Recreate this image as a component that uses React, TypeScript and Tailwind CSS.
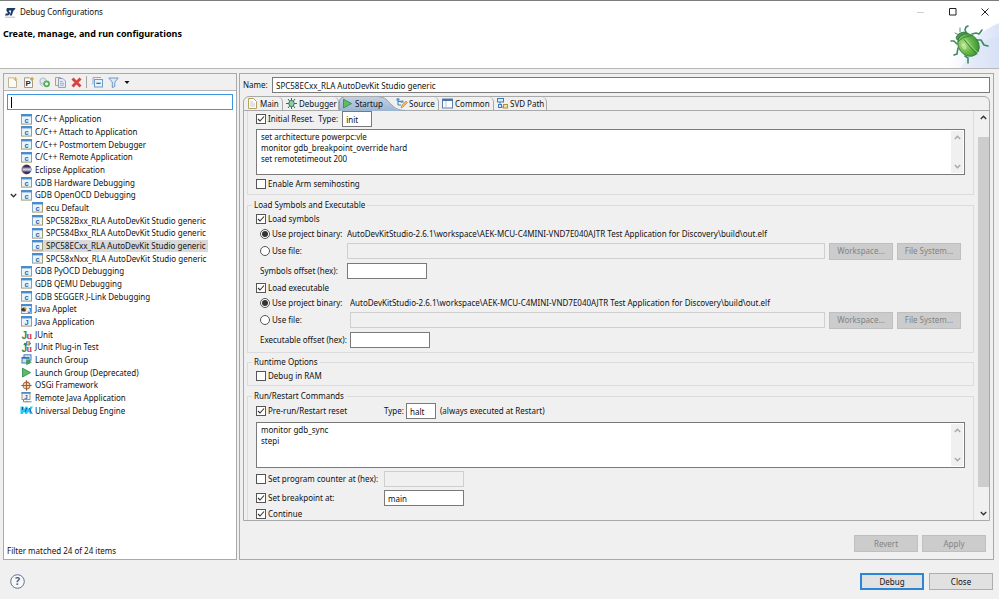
import React, { useState } from "react";
import clsx from "clsx";

type IconName =
  | "c"
  | "eclipse"
  | "applet"
  | "java"
  | "junit"
  | "junitPlugin"
  | "group"
  | "play"
  | "osgi"
  | "remote"
  | "ude";

interface TreeItem {
  label: string;
  icon: IconName;
  child?: boolean;
  open?: boolean;
}

const items: TreeItem[] = [
  { label: "C/C++ Application", icon: "c" },
  { label: "C/C++ Attach to Application", icon: "c" },
  { label: "C/C++ Postmortem Debugger", icon: "c" },
  { label: "C/C++ Remote Application", icon: "c" },
  { label: "Eclipse Application", icon: "eclipse" },
  { label: "GDB Hardware Debugging", icon: "c" },
  { label: "GDB OpenOCD Debugging", icon: "c", open: true },
  { label: "ecu Default", icon: "c", child: true },
  { label: "SPC582Bxx_RLA AutoDevKit Studio generic", icon: "c", child: true },
  { label: "SPC584Bxx_RLA AutoDevKit Studio generic", icon: "c", child: true },
  { label: "SPC58ECxx_RLA AutoDevKit Studio generic", icon: "c", child: true },
  { label: "SPC58xNxx_RLA AutoDevKit Studio generic", icon: "c", child: true },
  { label: "GDB PyOCD Debugging", icon: "c" },
  { label: "GDB QEMU Debugging", icon: "c" },
  { label: "GDB SEGGER J-Link Debugging", icon: "c" },
  { label: "Java Applet", icon: "applet" },
  { label: "Java Application", icon: "java" },
  { label: "JUnit", icon: "junit" },
  { label: "JUnit Plug-in Test", icon: "junitPlugin" },
  { label: "Launch Group", icon: "group" },
  { label: "Launch Group (Deprecated)", icon: "play" },
  { label: "OSGi Framework", icon: "osgi" },
  { label: "Remote Java Application", icon: "remote" },
  { label: "Universal Debug Engine", icon: "ude" },
];

const BINARY =
  "AutoDevKitStudio-2.6.1\\workspace\\AEK-MCU-C4MINI-VND7E040AJTR Test Application for Discovery\\build\\out.elf";

function Svg({ children, className = "size-[11px]" }: { children: React.ReactNode; className?: string }) {
  return (
    <svg viewBox="0 0 11 11" className={clsx("shrink-0 overflow-visible", className)} aria-hidden="true">
      {children}
    </svg>
  );
}

function WindowFrame({ letter }: { letter: string }) {
  return (
    <>
      <rect x="0.5" y="0.5" width="10" height="9.6" fill="#eaf4fc" stroke="#a39b6e" />
      <rect x="0" y="0" width="11" height="2.4" fill="#4a8cca" />
      <path d="M0.5 2v8" stroke="#7fa6c9" />
      <text x="5.6" y="8.6" textAnchor="middle" fontSize="7.5" fontWeight="700" fill="#2468ac" fontFamily="Liberation Sans, sans-serif">
        {letter}
      </text>
    </>
  );
}

function TreeIcon({ name }: { name: IconName }) {
  switch (name) {
    case "c":
      return <Svg><WindowFrame letter="c" /></Svg>;
    case "java":
      return <Svg><WindowFrame letter="J" /></Svg>;
    case "applet":
      return (
        <Svg>
          <rect x="0.5" y="0.5" width="10" height="9" fill="#eaf4fc" stroke="#a39b6e" />
          <rect width="11" height="2.2" fill="#4a8cca" />
          <path d="M0 5.4c2-2.4 4-2.4 5.4-.6l-1 2.6H1.6z" fill="#4b3a24" />
          <circle cx="4.4" cy="4.6" r="1.1" fill="#e8a33a" />
          <text x="8.2" y="9" textAnchor="middle" fontSize="6.5" fontWeight="700" fill="#2468ac" fontFamily="Liberation Sans, sans-serif">J</text>
        </Svg>
      );
    case "eclipse":
      return (
        <Svg>
          <circle cx="5.2" cy="5.5" r="4.9" fill="#e09a58" />
          <circle cx="5.8" cy="5.5" r="4.7" fill="#3a3060" />
          <path d="M1.6 3.6h8.400v3.800h-8.400z" fill="#a9a7c8" />
          <path d="M1.3 5.5h9" stroke="#d5d3e6" strokeWidth="0.8" />
        </Svg>
      );
    case "junit":
    case "junitPlugin":
      return (
        <Svg>
          <text x="0.6" y="9.6" fontSize="10" fontWeight="700" fill="#2f8a4c" fontFamily="Liberation Sans, sans-serif">J</text>
          <text x="5.6" y="9.6" fontSize="10" fontWeight="700" fill="#d0435a" fontFamily="Liberation Serif, serif">u</text>
          {name === "junitPlugin" && (
            <g>
              <path d="M3 1.500h7" stroke="#3f83c4" strokeWidth="1.2" />
              <rect x="5.6" y="-0.2" width="3.2" height="3.2" fill="#e6c25a" stroke="#3f6fa8" strokeWidth="0.7" />
            </g>
          )}
        </Svg>
      );
    case "group":
      return (
        <Svg>
          <rect x="3" y="0.8" width="7" height="5.4" fill="#dbeaf8" stroke="#3f7fb8" />
          <rect x="1" y="3.4" width="7" height="5.6" fill="#cfe2f3" stroke="#3f7fb8" />
          <path d="M1 4h7" stroke="#2f6ba8" strokeWidth="1.4" />
          <path d="M5.6 5.4l4.8 2.8-4.8 2.6z" fill="#3fa64a" stroke="#2b7f43" strokeWidth="0.5" />
        </Svg>
      );
    case "play":
      return (
        <Svg>
          <path d="M1.5 1.2l8 4.4-8 4.4z" fill="#62bb62" stroke="#2f9150" strokeWidth="0.9" />
        </Svg>
      );
    case "osgi":
      return (
        <Svg>
          <circle cx="5.5" cy="5.5" r="3.4" fill="#f3d9bd" stroke="#a8683a" strokeWidth="1.1" />
          <path d="M5.5 0.3v10.4M0.3 5.5h10.4" stroke="#9c5f35" strokeWidth="1.1" />
        </Svg>
      );
    case "remote":
      return (
        <Svg>
          <rect x="1" y="0.5" width="8" height="7" fill="#eaf4fc" stroke="#a39b6e" />
          <rect x="0.5" y="0" width="9" height="1.8" fill="#4a8cca" />
          <text x="5" y="6.9" textAnchor="middle" fontSize="6" fontWeight="700" fill="#2468ac" fontFamily="Liberation Sans, sans-serif">J</text>
          <path d="M2.5 7.8v2h8M6 9.8v-1" stroke="#6f7f92" fill="none" />
        </Svg>
      );
    case "ude":
      return (
        <Svg>
          <path d="M-0.500 1.500h3l1 2.500 1-2.500h1.500L8 4l1.500-2.500H12L9.800 5.200 12 9H9L7.400 6.800 6 9H4.500L3 6.800 2 9h-2.500z" fill="#22cdf4" />
          <path d="M1.500 2v3M5.600 3l-1.400 4M8.400 3l1.800 4.500" stroke="#1b4fb0" strokeWidth="1" fill="none" />
        </Svg>
      );
  }
}

function StLogo() {
  return (
    <svg viewBox="0 0 11 11" className="size-[11px] shrink-0" aria-hidden="true">
      <path d="M2.2 1h8.3L9.2 3.4H8.5L6.8 8.5H4.7L6.3 3.4H4.6c-.9 0-1 .6-.5 1l.6.7C5.6 6.2 4.7 8.5 2.8 8.5H0l.8-2h1.4c.8 0 .9-.5.5-.9l-.6-.7C1 3.6 1.2 1.8 2.2 1z" fill="#1d3a66" />
      <path d="M0 10.2h10" stroke="#8fa3bf" strokeWidth="0.7" />
    </svg>
  );
}

function BugBanner() {
  return (
    <svg viewBox="0 0 60 45" className="h-[45px] w-[60px]" aria-hidden="true">
      <defs>
        <linearGradient id="sky" x1="0" x2="1" y1="0.600" y2="0.500">
          <stop offset="0" stopColor="#ffffff" />
          <stop offset="0.45" stopColor="#f0f4fc" />
          <stop offset="1" stopColor="#dce5f7" />
        </linearGradient>
        <radialGradient id="shell" cx="0.35" cy="0.35" r="0.75">
          <stop offset="0" stopColor="#b4e087" />
          <stop offset="0.5" stopColor="#69b948" />
          <stop offset="1" stopColor="#358c36" />
        </radialGradient>
      </defs>
      <path d="M6 45C22 26 40 8 60 0v45z" fill="url(#sky)" />
      <path d="M36 22C44 18 52 15 60 14v31H22z" fill="#cddaf3" opacity="0.35" />
      <g fill="none" stroke="#3a8a64" strokeWidth="1.600" strokeLinecap="round" strokeLinejoin="round">
        <path d="M27 9l-1-2 1-3 2-1" />
        <path d="M33 11l4-1 3 1 3-4" />
        <path d="M38 17l4 0 3 5 4 1" />
        <path d="M18 21l-3-3h-3" />
        <path d="M19 25l-1 6-3 1" />
        <path d="M26 33l3 2v5" />
        <path d="M20 12l-4-2M21 9l0-4" strokeWidth="0.9" />
      </g>
      <ellipse cx="23.5" cy="13.5" rx="6.5" ry="4" transform="rotate(-20 23.5 13.5)" fill="#4d9a43" stroke="#2d7540" strokeWidth="0.8" />
      <ellipse cx="29.5" cy="22" rx="10" ry="12" transform="rotate(-38 29.5 22)" fill="url(#shell)" stroke="#347f42" strokeWidth="0.9" />
      <path d="M19 19c3-4 8-6 13-6M25 16.5c4 5 8 9.500 13 15" fill="none" stroke="#2d7a3c" strokeWidth="0.900" />
      <path d="M26.200 16c4 5 8 9 12.800 14" fill="none" stroke="#c6ebb0" strokeWidth="0.6" />
      <ellipse cx="25" cy="23.500" rx="2" ry="3.500" transform="rotate(-30 25 23.500)" fill="#d5f2bd" opacity="0.55" />
    </svg>
  );
}

function Chevron({ up, className }: { up?: boolean; className?: string }) {
  return (
    <svg viewBox="0 0 7 5" className={clsx("h-[5px] w-[7px] fill-none stroke-[1.4]", className)} aria-hidden="true">
      <path d={up ? "M0.800 4L3.500 1.300 6.200 4" : "M0.800 1L3.500 3.700 6.200 1"} />
    </svg>
  );
}

function Check({
  label,
  checked,
  className,
}: {
  label: string;
  checked?: boolean;
  className?: string;
}) {
  return (
    <label className={clsx("flex h-[14px] shrink-0 items-center gap-[2px] whitespace-nowrap pl-2", className)}>
      <span className="grid size-[10px] shrink-0 place-items-center">
        <input
          type="checkbox"
          defaultChecked={checked}
          className="peer col-start-1 row-start-1 size-[10px] appearance-none border border-[#555] bg-white"
        />
        <svg
          viewBox="0 0 10 10"
          className="pointer-events-none invisible col-start-1 row-start-1 size-[10px] fill-none stroke-[#333] peer-checked:visible"
          aria-hidden="true"
        >
          <path d="M2 5l2 2 4-4.500" strokeWidth="1.100" />
        </svg>
      </span>
      {label}
    </label>
  );
}

function Radio({ label, name, checked }: { label: string; name: string; checked?: boolean }) {
  return (
    <label className="flex items-center gap-[2px] whitespace-nowrap pl-3">
      <span className="grid size-[10px] shrink-0 place-items-center">
        <input
          type="radio"
          name={name}
          defaultChecked={checked}
          className="peer col-start-1 row-start-1 size-[10px] appearance-none rounded-full border border-[#555] bg-white"
        />
        <span className="pointer-events-none invisible col-start-1 row-start-1 size-[6px] rounded-full bg-[#333] peer-checked:visible" />
      </span>
      {label}
    </label>
  );
}

const field = "h-[16px] border border-[#7a7a7a] bg-white px-[3px] leading-3 outline-none";
const fieldOff = "h-[16px] border border-[#cfcfcf] bg-[#f0f0f0] px-[3px] outline-none";

function PushButton({ children, disabled, primary }: { children: string; disabled?: boolean; primary?: boolean }) {
  return (
    <button
      type="button"
      disabled={disabled}
      className={clsx(
        "h-[17px] w-16 shrink-0 leading-3",
        disabled && "border border-[#bfbfbf] bg-[#cccccc] text-[#838383]",
        !disabled && !primary && "border border-[#adadad] bg-[#e1e1e1]",
        primary && "border-2 border-[#2b86d9] bg-[#e1e1e1]",
      )}
    >
      {children}
    </button>
  );
}

function CommandBox({ label, text }: { label: string; text: string }) {
  return (
    <div className="mx-2 flex h-[46px] border border-[#7a7a7a] bg-white p-px">
      <textarea
        aria-label={label}
        defaultValue={text}
        className="min-w-0 flex-1 resize-none overflow-hidden pl-[3px] leading-[11px] outline-none"
      />
      <div className="flex w-[12px] flex-col items-center justify-between bg-[#f0f0f0] py-1">
        <Chevron up className="stroke-[#a8a8a8]" />
        <Chevron className="stroke-[#a8a8a8]" />
      </div>
    </div>
  );
}

function Group({ title, children, className }: { title?: string; children: React.ReactNode; className?: string }) {
  return (
    <fieldset className={clsx("min-w-0 border border-[#dcdcdc]", className)}>
      {title && <legend className="ml-1 h-3 px-[2px] leading-3">{title}</legend>}
      {children}
    </fieldset>
  );
}

function BinarySection({ kind, offset, columns }: { kind: string; offset: string; columns: string }) {
  return (
    <>
      <Check label={`Load ${kind}`} checked />
      <div className={clsx("mt-px grid h-[14px] items-center", columns)}>
        <Radio name={kind} label="Use project binary:" checked />
        <span className="truncate">{BINARY}</span>
      </div>
      <div className={clsx("mt-px grid h-[18px] items-center pr-3", columns)}>
        <Radio name={kind} label="Use file:" />
        <div className="flex items-center gap-1">
          <input aria-label={`${kind} file`} disabled className={clsx(fieldOff, "min-w-0 flex-1")} />
          <PushButton disabled>Workspace...</PushButton>
          <PushButton disabled>File System...</PushButton>
        </div>
      </div>
      <label className={clsx("mt-[3px] grid items-center", columns)}>
        <span className="whitespace-nowrap pl-3">{offset}</span>
        <input className={clsx(field, "w-20")} />
      </label>
    </>
  );
}

function Toolbar() {
  return (
    <div className="flex h-[17px] shrink-0 items-center gap-[5px] border-b border-[#b4b4b4] bg-[#f0f0f0] pl-[3px]">
      <button type="button" aria-label="New launch configuration">
        <Svg>
          <path d="M1.500 0.800h5l3 3v6.700h-8z" fill="#fdfbf3" stroke="#b9ad86" strokeWidth="0.900" />
          <path d="M8.500 0v4M6.500 2h4" stroke="#e3b341" strokeWidth="1.200" />
        </Svg>
      </button>
      <button type="button" aria-label="New prototype">
        <Svg>
          <path d="M1.500 0.800h5l3 3v6.700h-8z" fill="#fdfbf3" stroke="#9a9274" strokeWidth="0.900" />
          <text x="2.400" y="8.800" fontSize="8" fontWeight="700" fill="#1d2a44" fontFamily="Liberation Sans, sans-serif">P</text>
          <path d="M9 0v4M7 2h4" stroke="#c99a2e" strokeWidth="1.200" />
        </Svg>
      </button>
      <button type="button" aria-label="Export">
        <Svg>
          <circle cx="4" cy="4" r="3" fill="#e4e8ef" stroke="#b3bccb" strokeWidth="1.200" />
          <path d="M0.500 6.500l3 3" stroke="#b3bccb" />
          <circle cx="7.600" cy="6.800" r="2.500" fill="#e9f7e9" stroke="#4fae57" strokeWidth="1.700" />
        </Svg>
      </button>
      <button type="button" aria-label="Duplicate">
        <Svg>
          <path d="M0.500 0.500h5v8h-5z" fill="#f3ecd6" stroke="#a79b72" strokeWidth="0.900" />
          <path d="M3.500 1.500h4.500l2.500 2.500v6.500h-7z" fill="#dfe9f5" stroke="#8f9db3" strokeWidth="0.900" />
          <path d="M5 4.500h2.500M5 6.300h4M5 8.200h4" stroke="#8fa6c6" strokeWidth="0.800" />
        </Svg>
      </button>
      <button type="button" aria-label="Delete">
        <Svg>
          <path d="M1.500 1.500l8 8M9.500 1.500l-8 8" stroke="#dc4040" strokeWidth="2.900" />
        </Svg>
      </button>
      <span className="-ml-px h-3 w-px bg-[#a5a5a5]" />
      <button type="button" aria-label="Collapse all">
        <Svg>
          <path d="M1 7.500v-7h8" fill="none" stroke="#86aed2" />
          <rect x="2.500" y="2.500" width="8" height="7.500" fill="#e8f3fc" stroke="#6c9cc8" />
          <path d="M4.300 6.300h4.400" stroke="#2c5f96" strokeWidth="1.200" />
        </Svg>
      </button>
      <button type="button" aria-label="Filter">
        <Svg>
          <path d="M0.800 1h9.400L6.800 5.200v4.300L4.300 10.500V5.200z" fill="#dcebf8" stroke="#6d97c4" />
        </Svg>
      </button>
      <button type="button" aria-label="Filter menu">
        <svg viewBox="0 0 5 3" className="h-[3px] w-[6px]" aria-hidden="true">
          <path d="M0 0h5L2.500 3z" fill="#111" />
        </svg>
      </button>
    </div>
  );
}

const tabs = [
  { label: "Main", width: "w-[39px]" },
  { label: "Debugger", width: "w-[56px]" },
  { label: "Startup", width: "w-[54px]" },
  { label: "Source", width: "w-[46px]" },
  { label: "Common", width: "w-[55px]" },
  { label: "SVD Path", width: "w-[53px]" },
];

function TabIcon({ name }: { name: string }) {
  switch (name) {
    case "Main":
      return (
        <Svg>
          <path d="M1.500 0.500h5l3 3v7h-8z" fill="#fffdf5" stroke="#b8a05f" />
          <path d="M3 4h3M3 6h5M3 8h5" stroke="#a9c0dc" strokeWidth="0.800" />
        </Svg>
      );
    case "Debugger":
      return (
        <Svg>
          <path d="M2 1l2 2.500M9 1L7 3.500M0 5.500h11M2 10l2-2.500M9 10L7 7.500M5.500 0v11" stroke="#2e6e62" strokeWidth="1" />
          <ellipse cx="5.500" cy="5.500" rx="2.700" ry="3.200" fill="#8fcf9a" stroke="#2e6e62" strokeWidth="0.900" />
        </Svg>
      );
    case "Startup":
      return <TreeIcon name="play" />;
    case "Source":
      return (
        <Svg>
          <path d="M2 0v7h3M2 3.500h4" stroke="#3f7fb8" fill="none" />
          <rect x="0.500" y="0.500" width="3" height="2.200" fill="#5a94cc" />
          <rect x="4.500" y="2.500" width="3" height="2.200" fill="#5a94cc" />
          <path d="M5 10l1-3 4-4 1.500 1.500-4 4z" fill="#f0b860" stroke="#b97d2b" strokeWidth="0.600" />
        </Svg>
      );
    case "Common":
      return (
        <Svg>
          <rect x="0.500" y="1" width="10" height="9" fill="#fbfdff" stroke="#5f7fa8" />
          <path d="M0.500 2h10" stroke="#4a74a8" strokeWidth="2" />
          <path d="M4 3v7" stroke="#b5c6da" />
        </Svg>
      );
    default:
      return (
        <Svg>
          <path d="M3 4v5h4" stroke="#6f7f92" fill="none" />
          <rect x="0.500" y="0.500" width="6" height="3.500" fill="#dcebf8" stroke="#3f7fb8" />
          <rect x="6.500" y="6.500" width="4" height="3.500" fill="#f3e0a4" stroke="#b3923f" />
          <rect x="1.500" y="6.500" width="3" height="3" fill="#dcebf8" stroke="#3f7fb8" />
        </Svg>
      );
  }
}

export default function App() {
  const [selected, setSelected] = useState("SPC58ECxx_RLA AutoDevKit Studio generic");
  const [activeTab, setActiveTab] = useState("Startup");

  return (
    <div className="flex h-screen w-full flex-col overflow-hidden bg-[#f0f0f0] font-['Noto_Sans','Open_Sans',sans-serif] text-[8px] leading-3 text-[#111]">
      <header className="shrink-0 border-b border-t border-b-[#b8b8b8] border-t-[#7d7d7d] bg-white">
        <div className="flex h-[22px] items-center pl-[5px] pr-[10px]">
          <StLogo />
          <span className="ml-1 flex-1">Debug Configurations</span>
          <div className="flex items-center gap-6">
            <button type="button" aria-label="Minimize" disabled>
              <svg viewBox="0 0 8 8" className="size-2"><path d="M0 4.500h7" stroke="#cfcfcf" /></svg>
            </button>
            <button type="button" aria-label="Maximize">
              <svg viewBox="0 0 8 8" className="size-2"><path d="M0.500 0.500h6.500v6.500h-6.500z" fill="none" stroke="#222" /></svg>
            </button>
            <button type="button" aria-label="Close window">
              <svg viewBox="0 0 8 8" className="size-2"><path d="M0.500 0.500l7 7M7.500 0.500l-7 7" stroke="#222" /></svg>
            </button>
          </div>
        </div>
        <div className="flex h-[45px] justify-between pl-[3px]">
          <h1 className="pt-[5px] text-[9px] font-bold text-black">Create, manage, and run configurations</h1>
          <BugBanner />
        </div>
      </header>

      <main className="flex min-h-0 flex-1 gap-[2px] pl-[3px] pr-[5px] pt-1">
        <section className="flex w-[234px] shrink-0 flex-col border border-[#a9a9a9] bg-white">
          <Toolbar />
          <div className="mx-[3px] mt-[3px] flex h-4 shrink-0 items-center border border-[#3c97e3] pl-[3px]">
            <span className="h-[11px] w-px bg-black" />
            <input aria-label="Filter configurations" className="h-3 min-w-0 flex-1 outline-none" />
          </div>
          <ul className="mt-[3px] grid h-76 shrink-0 auto-rows-fr">
            {items.map((item) => (
              <li key={item.label} className={clsx("flex items-center", item.child ? "pl-7" : "pl-[6px]")}>
                {!item.child && (
                  <span className="w-[11px]">{item.open && <Chevron className="stroke-[#333]" />}</span>
                )}
                <button
                  type="button"
                  onClick={() => setSelected(item.label)}
                  className={clsx(
                    "flex h-full items-center gap-[3px] whitespace-nowrap pr-[2px]",
                    selected === item.label && "bg-[#d9d9d9]",
                  )}
                >
                  <TreeIcon name={item.icon} />
                  {item.label}
                </button>
              </li>
            ))}
          </ul>
          <p className="mt-auto pb-[2px] pl-[3px]">Filter matched 24 of 24 items</p>
        </section>

        <section className="flex min-w-0 flex-1 flex-col border border-[#a9a9a9] px-[3px] pt-[3px]">
          <label className="flex h-4 shrink-0 items-center">
            <span className="w-[29px]">Name:</span>
            <input
              defaultValue="SPC58ECxx_RLA AutoDevKit Studio generic"
              className={clsx(field, "min-w-0 flex-1")}
            />
          </label>

          <div className="mt-[3px] flex min-h-0 flex-1 flex-col rounded-t-md border border-[#a9a9a9]">
            <div role="tablist" className="flex h-[14px] shrink-0 border-b border-[#a9a9a9]">
              {tabs.map((tab) => {
                const active = activeTab === tab.label;
                return (
                  <button
                    key={tab.label}
                    type="button"
                    role="tab"
                    aria-selected={active}
                    onClick={() => setActiveTab(tab.label)}
                    className={clsx(
                      "relative flex items-center whitespace-nowrap pl-[3px]",
                      tab.width,
                      !active && "rounded-t-[5px] border-r border-[#a9a9a9]",
                    )}
                  >
                    {active && (
                      <svg viewBox="0 0 67 14" className="absolute left-0 top-0 h-[14px] w-[67px]" aria-hidden="true">
                        <defs>
                          <linearGradient id="tab" x1="0" x2="0" y1="0" y2="1">
                            <stop offset="0" stopColor="#c3d2e4" />
                            <stop offset="1" stopColor="#9bb5d2" />
                          </linearGradient>
                        </defs>
                        <path d="M0 14V5Q0 0 5 0H40C52 0 50 14 67 14z" fill="url(#tab)" />
                        <path d="M0.500 14V5Q0.500 0.500 5 0M40 0C52 0 50 13.500 67 13.500" fill="none" stroke="#93a5ba" />
                      </svg>
                    )}
                    <span className="relative z-10 flex items-center gap-[2px]">
                      <TabIcon name={tab.label} />
                      {tab.label}
                    </span>
                  </button>
                );
              })}
            </div>

            <div className="flex min-h-0 flex-1 overflow-hidden">
              <div className="min-w-0 flex-1 pl-[3px]">
                <Group className="border-t-0 pb-[3px]">
                  <div className="flex items-center">
                    <Check label="Initial Reset." checked />
                    <label className="ml-1 flex items-center gap-1">
                      Type:
                      <input defaultValue="init" className={clsx(field, "h-[15px] w-[30px]")} />
                    </label>
                  </div>
                  <div className="mt-[2px]">
                    <CommandBox
                      label="Initialization commands"
                      text={"set architecture powerpc:vle\nmonitor gdb_breakpoint_override hard\nset remotetimeout 200"}
                    />
                  </div>
                  <Check label="Enable Arm semihosting" className="mt-[2px]" />
                </Group>

                <Group title="Load Symbols and Executable" className="mt-1 pb-1 pt-px">
                  <BinarySection kind="symbols" offset="Symbols offset (hex):" columns="grid-cols-[99px_1fr]" />
                  <div className="h-[2px]" />
                  <BinarySection kind="executable" offset="Executable offset (hex):" columns="grid-cols-[102px_1fr]" />
                </Group>

                <Group title="Runtime Options" className="mt-[3px] pb-[2px] pt-px">
                  <Check label="Debug in RAM" />
                </Group>

                <Group title="Run/Restart Commands" className="mt-1 pt-px">
                  <div className="flex items-center">
                    <Check label="Pre-run/Restart reset" checked className="w-[136px]" />
                    <label className="flex items-center gap-[2px]">
                      Type:
                      <input defaultValue="halt" className={clsx(field, "w-[30px]")} />
                    </label>
                    <span className="ml-1">(always executed at Restart)</span>
                  </div>
                  <div className="mt-[3px]">
                    <CommandBox label="Run commands" text={"monitor gdb_sync\nstepi"} />
                  </div>
                  <div className="mt-[3px] flex items-center">
                    <Check label="Set program counter at (hex):" className="w-[136px]" />
                    <input aria-label="Program counter" disabled className={clsx(fieldOff, "w-20")} />
                  </div>
                  <div className="mt-[3px] flex items-center">
                    <Check label="Set breakpoint at:" checked className="w-[136px]" />
                    <input aria-label="Breakpoint" defaultValue="main" className={clsx(field, "w-20")} />
                  </div>
                  <Check label="Continue" checked className="mt-px" />
                </Group>
              </div>

              <div className="ml-1 flex w-[11px] shrink-0 flex-col items-center">
                <div className="flex h-[26px] shrink-0 items-start pt-1">
                  <Chevron up className="stroke-[#333]" />
                </div>
                <div className="w-full flex-1 bg-[#cdcdcd]" />
                <div className="flex h-[33px] shrink-0 items-end pb-1">
                  <Chevron className="stroke-[#333]" />
                </div>
              </div>
            </div>
          </div>

          <div className="flex shrink-0 justify-end gap-1 pb-[7px] pr-1 pt-[14px]">
            <PushButton disabled>Revert</PushButton>
            <PushButton disabled>Apply</PushButton>
          </div>
        </section>
      </main>

      <footer className="flex h-[39px] shrink-0 items-center justify-between pl-[10px] pr-[6px] pt-1">
        <button type="button" aria-label="Help">
          <svg viewBox="0 0 15 15" className="size-[15px]" aria-hidden="true">
            <circle cx="7.500" cy="7.500" r="6.800" fill="#f6f8fb" stroke="#5f7391" strokeWidth="1" />
            <text x="7.500" y="11.200" textAnchor="middle" fontSize="10.500" fontWeight="700" fill="#465f86">?</text>
          </svg>
        </button>
        <div className="flex gap-[5px]">
          <PushButton primary>Debug</PushButton>
          <PushButton>Close</PushButton>
        </div>
      </footer>
    </div>
  );
}
